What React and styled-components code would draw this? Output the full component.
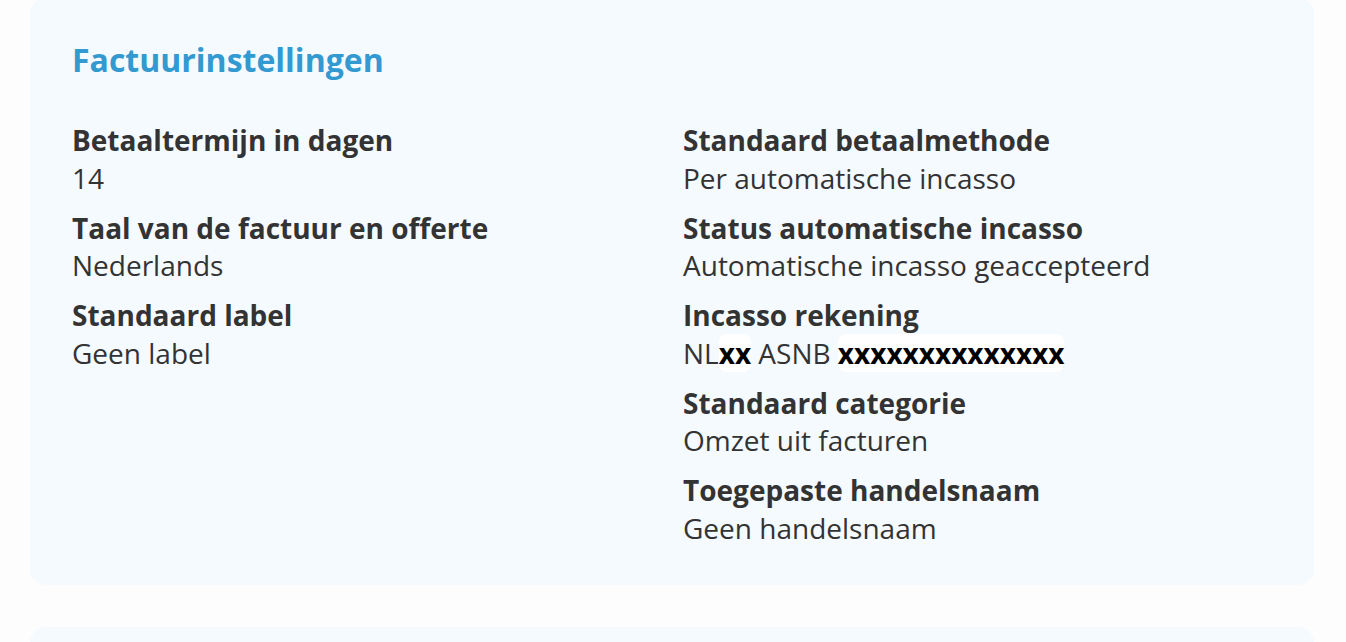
import React from "react";
import styled, { createGlobalStyle } from "styled-components";

const GlobalStyle = createGlobalStyle`
  body {
    margin: 0;
    background: #fdfdfd;
    font-family: "Open Sans", "Noto Sans", sans-serif;
    color: #333333;
  }
`;

const leftFields = [
  { label: "Betaaltermijn in dagen", value: "14" },
  { label: "Taal van de factuur en offerte", value: "Nederlands" },
  { label: "Standaard label", value: "Geen label" },
];

const rightFields = [
  { label: "Standaard betaalmethode", value: "Per automatische incasso" },
  { label: "Status automatische incasso", value: "Automatische incasso geaccepteerd" },
  { label: "Incasso rekening", iban: true },
  { label: "Standaard categorie", value: "Omzet uit facturen" },
  { label: "Toegepaste handelsnaam", value: "Geen handelsnaam" },
];

const App = () => {
  const renderField = (field, i) => (
    <StField key={i}>
      <StLabel>{field.label}</StLabel>
      {field.iban ? (
        <StValue>
          NL<StMask>xx</StMask> ASNB <StMask>xxxxxxxxxxxxxx</StMask>
        </StValue>
      ) : (
        <StValue>{field.value}</StValue>
      )}
    </StField>
  );

  return (
    <>
      <GlobalStyle />
      <StPage>
        <StCard>
          <StTitle>Factuurinstellingen</StTitle>
          <StGrid>
            <StColumn>{leftFields.map(renderField)}</StColumn>
            <StColumn>{rightFields.map(renderField)}</StColumn>
          </StGrid>
        </StCard>
        <StCard />
      </StPage>
    </>
  );
};

const StPage = styled.div`
  display: flex;
  flex-direction: column;
  gap: 42px;
  padding: 0 32px 0 30px;
  margin-top: -2px;
`;

const StCard = styled.div`
  background-color: #f5faff;
  border-radius: 16px;
  padding: 43px 42px 38px;
  min-height: 40px;
`;

const StTitle = styled.h2`
  margin: 0;
  font-size: 32px;
  line-height: 38px;
  font-weight: 700;
  color: #3399d1;
`;

const StGrid = styled.div`
  display: grid;
  grid-template-columns: 1fr 1fr;
  column-gap: 22px;
  margin-top: 43px;
`;

const StColumn = styled.div`
  display: flex;
  flex-direction: column;
  gap: 12.5px;
`;

const StField = styled.div`
  display: flex;
  flex-direction: column;
`;

const StLabel = styled.div`
  font-size: 28px;
  line-height: 37.5px;
  font-weight: 700;
  color: #333333;
`;

const StValue = styled.div`
  font-size: 28px;
  line-height: 37.5px;
  font-weight: 400;
  color: #333333;
`;

const StMask = styled.span`
  font-weight: 700;
  color: #000000;
  background-color: #ffffff;
  border-radius: 8px;
`;

export default App;
